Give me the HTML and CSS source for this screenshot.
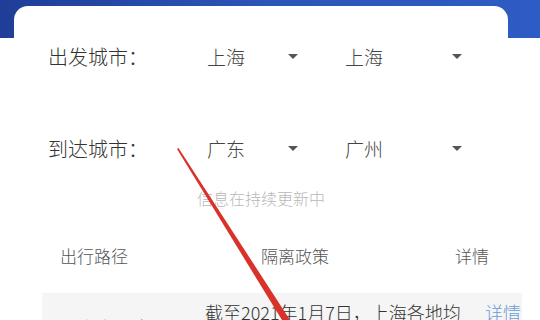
FILE: index.html
```
<!DOCTYPE html>
<html lang="zh-CN">
<head>
    <meta charset="UTF-8">
    <meta name="viewport" content="width=device-width, initial-scale=1.0">
    <title>出行政策查询</title>
    <link rel="stylesheet" href="styles.css">
</head>
<body>
    <div class="card">
        <div class="row">
            <span class="label">出发城市：</span>
            <div class="select s1"><span>上海</span><i class="caret"></i></div>
            <div class="select s2"><span>上海</span><i class="caret"></i></div>
        </div>
        <div class="row row2">
            <span class="label">到达城市：</span>
            <div class="select s1"><span>广东</span><i class="caret"></i></div>
            <div class="select s2"><span>广州</span><i class="caret"></i></div>
        </div>

        <p class="note">信息在持续更新中</p>

        <div class="table">
            <div class="thead">
                <span>出行路径</span>
                <span>隔离政策</span>
                <span>详情</span>
            </div>
            <div class="trow">
                <span class="route">上海—广州</span>
                <span class="policy">截至2021年1月7日，上海各地均为低风险地区</span>
                <a class="more" href="#">详情</a>
            </div>
        </div>
    </div>

    <!-- 标注用的红线 -->
    <svg class="pen" width="540" height="320" viewBox="0 0 540 320">
        <polygon points="177,149 178.5,148 290,320 282,320" fill="#d8322a"/>
    </svg>
</body>
</html>
```

FILE: styles.css
```
body {
    margin: 0;
    height: 320px;
    overflow: hidden;
    font-family: "Noto Sans CJK SC", "Liberation Serif", serif;
    font-weight: 300;
    color: #333;
    background: linear-gradient(90deg, #1f3e97 0%, #2c55b8 50%, #2d5cc4 100%) top / 100% 38px no-repeat, #fff;
}

.card {
    margin: 6px 32px 0 14px;
    padding-top: 29px;
    background: #fff;
    border-radius: 14px 14px 0 0;
    height: 400px;
}

.row {
    display: flex;
    align-items: center;
    height: 42px;
    padding-left: 34px;
}

.row2 {
    margin-top: 50px;
}

.label {
    width: 159px;
    font-size: 20px;
    color: #333;
}

.select {
    display: flex;
    align-items: center;
    justify-content: space-between;
    font-size: 19px;
    color: #444;
}

.select.s1 {
    width: 91px;
    margin-right: 47px;
}

.select.s2 {
    width: 117px;
}

.caret {
    width: 0;
    height: 0;
    border-left: 5px solid transparent;
    border-right: 5px solid transparent;
    border-top: 5px solid #555;
}

.note {
    margin: 17px 0 0;
    text-align: center;
    font-size: 16px;
    line-height: 24px;
    color: #b8b8b8;
}

.table {
    margin: 20px 0 0 28px;
    width: 480px;
}

.thead {
    display: grid;
    grid-template-columns: 104px 298px 56px 1fr;
    height: 50px;
    align-items: center;
    font-size: 17px;
    color: #555;
}

.thead span {
    text-align: center;
}

.trow {
    margin-top: 13px;
    display: grid;
    grid-template-columns: 163px 262px 1fr;
    padding-top: 8px;
    background: #f5f5f5;
    font-size: 18px;
    line-height: 22px;
    color: #333;
}

.route {
    padding-top: 15px;
    text-align: center;
    color: #555;
}

.more {
    padding-left: 18px;
    white-space: nowrap;
    color: #6a9bd8;
    text-decoration: none;
}

.pen {
    position: absolute;
    left: 0;
    top: 0;
    pointer-events: none;
}
```
